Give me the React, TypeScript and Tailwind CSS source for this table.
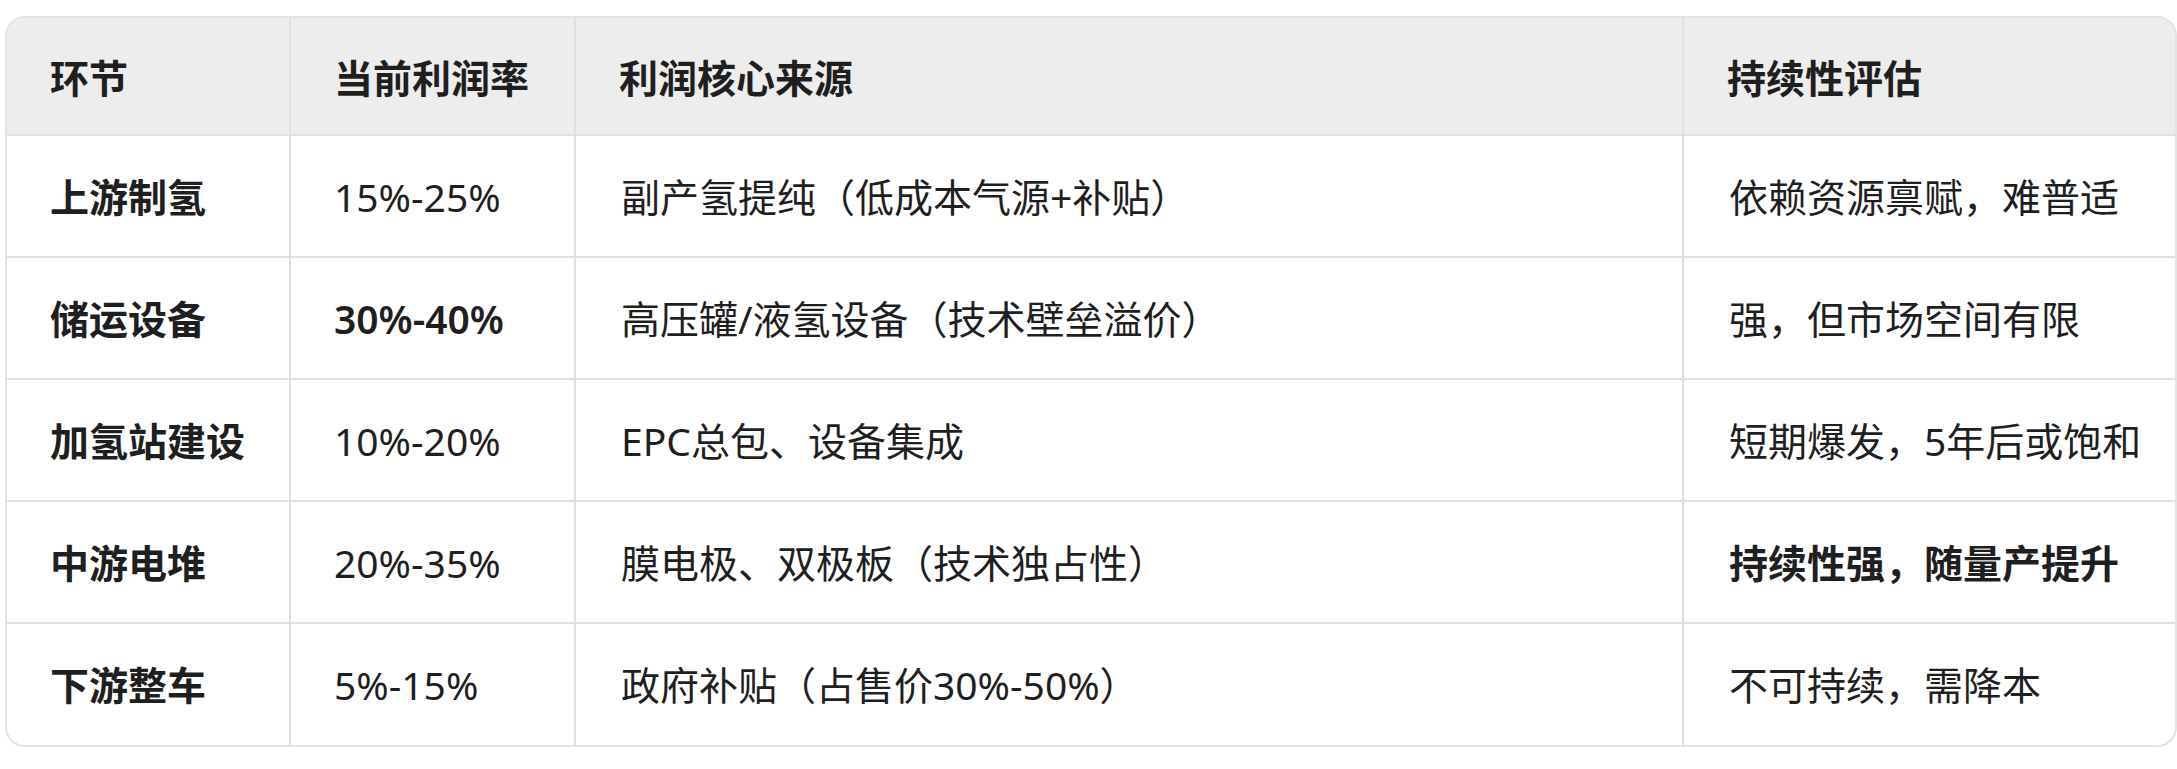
type Row = {
  stage: string;
  margin: string;
  source: string;
  outlook: string;
  boldMargin?: boolean;
  boldOutlook?: boolean;
};

const rows: Row[] = [
  { stage: "上游制氢", margin: "15%-25%", source: "副产氢提纯（低成本气源+补贴）", outlook: "依赖资源禀赋，难普适" },
  { stage: "储运设备", margin: "30%-40%", source: "高压罐/液氢设备（技术壁垒溢价）", outlook: "强，但市场空间有限", boldMargin: true },
  { stage: "加氢站建设", margin: "10%-20%", source: "EPC总包、设备集成", outlook: "短期爆发，5年后或饱和" },
  { stage: "中游电堆", margin: "20%-35%", source: "膜电极、双极板（技术独占性）", outlook: "持续性强，随量产提升", boldOutlook: true },
  { stage: "下游整车", margin: "5%-15%", source: "政府补贴（占售价30%-50%）", outlook: "不可持续，需降本" },
];

const headers = ["环节", "当前利润率", "利润核心来源", "持续性评估"];

export default function App() {
  return (
    <div
      className="min-h-[769px] w-[2177px] bg-white pt-[16px] pl-[5px] text-[#1f1f1f]"
      style={{ fontFamily: '"Noto Sans", "Noto Sans CJK SC", sans-serif' }}
    >
      <div className="w-[2172px] overflow-hidden rounded-[20px] border-2 border-[#e3e3e3]">
        <table className="w-full table-fixed border-collapse text-[39px] leading-[1.3]">
          <colgroup>
            <col className="w-[283px]" />
            <col className="w-[285px]" />
            <col className="w-[1108px]" />
            <col />
          </colgroup>
          <thead>
            <tr className="h-[117px] bg-[#ededed]">
              {headers.map((h, i) => (
                <th
                  key={h}
                  className={`px-[43px] pt-[4px] text-left font-semibold ${
                    i < headers.length - 1 ? "border-r-2 border-[#e0e0e0]" : ""
                  }`}
                >
                  {h}
                </th>
              ))}
            </tr>
          </thead>
          <tbody>
            {rows.map((r) => (
              <tr key={r.stage} className="h-[122px] border-t-2 border-[#e0e0e0]">
                <td className="border-r-2 border-[#e0e0e0] px-[43px] pt-[2px] font-semibold">{r.stage}</td>
                <td className={`border-r-2 border-[#e0e0e0] px-[43px] pt-[2px] ${r.boldMargin ? "font-semibold" : ""}`}>
                  {r.margin}
                </td>
                <td className="border-r-2 border-[#e0e0e0] px-[45px] pt-[2px]">{r.source}</td>
                <td className={`whitespace-nowrap px-[45px] pt-[2px] ${r.boldOutlook ? "font-semibold" : ""}`}>
                  {r.outlook}
                </td>
              </tr>
            ))}
          </tbody>
        </table>
      </div>
    </div>
  );
}
